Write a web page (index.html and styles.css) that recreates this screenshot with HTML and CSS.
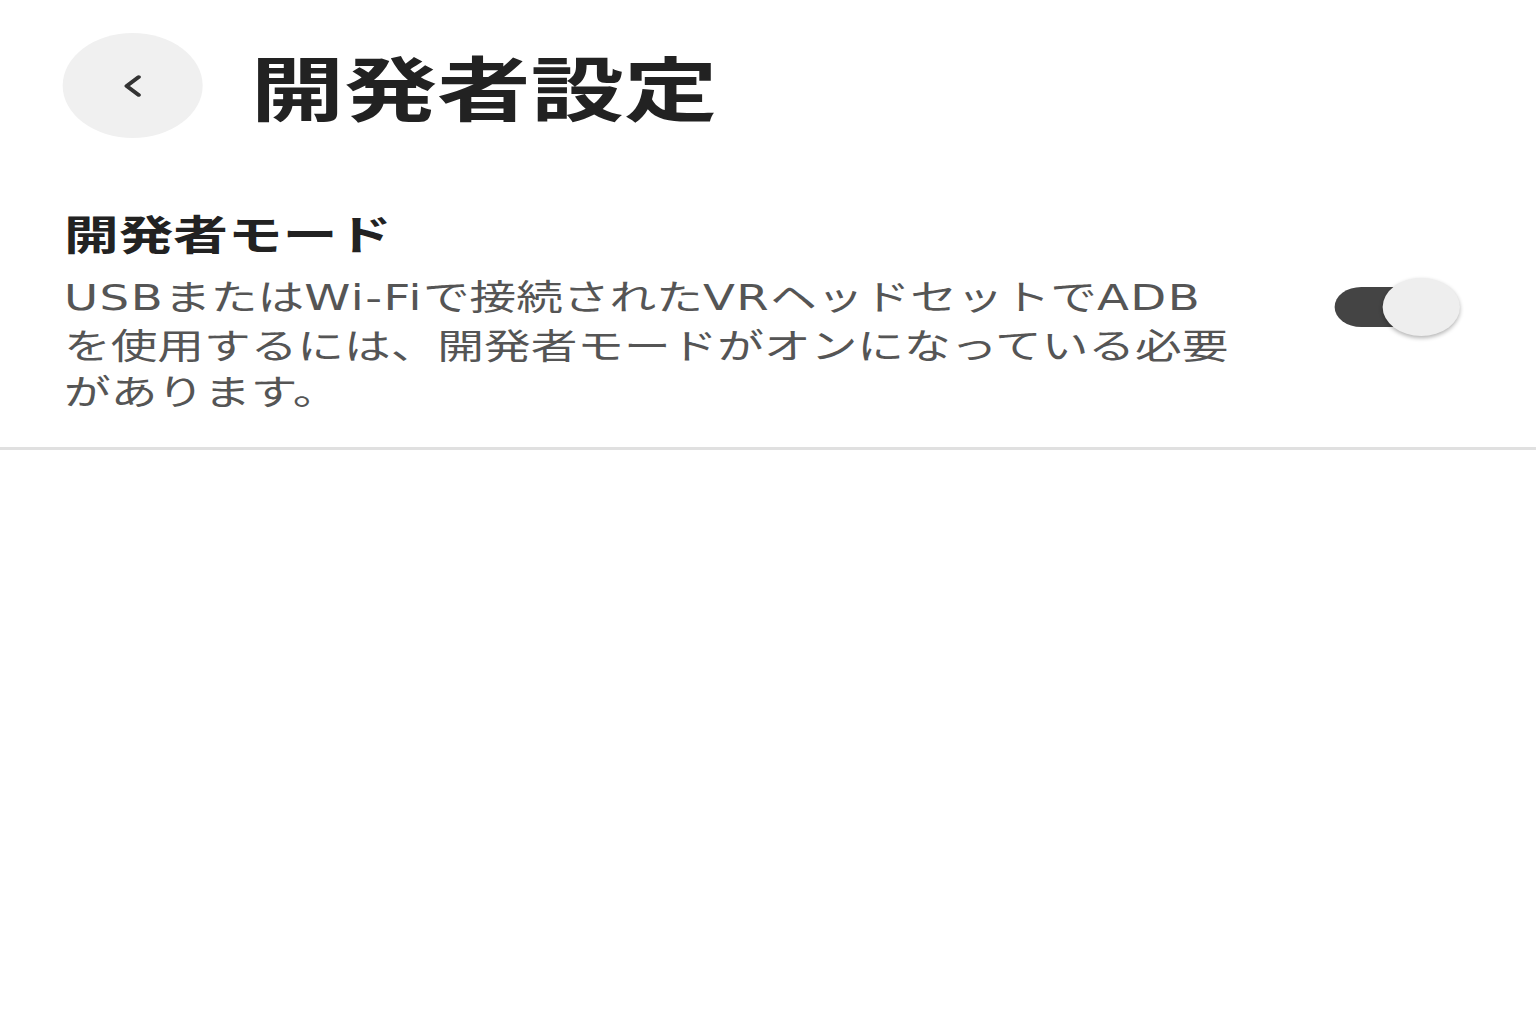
FILE: index.html
```html
<!DOCTYPE html>
<html lang="ja">
<head>
    <meta charset="UTF-8">
    <meta name="viewport" content="width=device-width, initial-scale=1.0">
    <title>開発者設定</title>
    <link rel="stylesheet" href="styles.css">
</head>
<body>
    <div class="screen">
        <header class="top-bar">
            <button class="back-btn" aria-label="戻る">
                <svg width="22" height="26" viewBox="0 0 22 26">
                    <path d="M15 4 L6 13 L15 22" fill="none" stroke="#333" stroke-width="3.4" stroke-linecap="round" stroke-linejoin="round"/>
                </svg>
            </button>
            <h1 class="page-title">開発者設定</h1>
        </header>

        <div class="setting-row">
            <div class="setting-text">
                <h2 class="setting-title">開発者モード</h2>
                <p class="setting-desc"><span class="en">USB</span>または<span class="en">Wi-Fi</span>で接続された<span class="en">VR</span>ヘッドセットで<span class="en">ADB</span>を使用するには、開発者モードがオンになっている必要があります。</p>
            </div>
            <!-- スイッチ (オン) -->
            <label class="switch">
                <input type="checkbox" checked>
                <span class="track"></span>
                <span class="thumb"></span>
            </label>
        </div>
    </div>
</body>
</html>
```

FILE: styles.css
```css
html, body {
    margin: 0;
    background-color: #fff;
    overflow: hidden;
}

body {
    font-family: "Noto Sans CJK JP", "Noto Sans", sans-serif;
    color: #222;
    height: 1024px;
}

/* 画面は横長に引き伸ばして表示する */
.screen {
    width: 1152px;
    transform: scaleX(1.3333);
    transform-origin: 0 0;
}

.top-bar {
    display: flex;
    align-items: center;
    padding: 33px 0 0 47px;
    gap: 36px;
}

.back-btn {
    width: 105px;
    height: 105px;
    border-radius: 50%;
    border: none;
    background-color: #f0f0f0;
    display: flex;
    justify-content: center;
    align-items: center;
    padding: 0;
    cursor: pointer;
}

.page-title {
    margin: 0;
    font-size: 70px;
    font-weight: 700;
    line-height: 105px;
    color: #222;
}

.setting-row {
    display: flex;
    justify-content: space-between;
    align-items: center;
    padding: 68px 57px 34px 48px;
    border-bottom: 3px solid #e0e0e0;
}

.setting-text {
    width: 885px;
}

.setting-title {
    margin: 0 0 14px;
    font-size: 41px;
    font-weight: 700;
    line-height: 52px;
    color: #222;
}

.setting-desc {
    margin: 0;
    font-size: 35px;
    line-height: 46px;
    color: #555;
}

/* 英字は少し広めに */
.setting-desc .en {
    font-family: "DejaVu Sans", "Noto Sans", sans-serif;
    letter-spacing: 1.1px;
}

.switch {
    position: relative;
    width: 94px;
    height: 60px;
    margin-top: -5px;
    cursor: pointer;
}

.switch input {
    display: none;
}

.track {
    position: absolute;
    left: 0;
    top: 10px;
    width: 88px;
    height: 40px;
    border-radius: 20px;
    background-color: #444;
}

.thumb {
    position: absolute;
    right: 0;
    top: 1px;
    width: 58px;
    height: 58px;
    border-radius: 50%;
    background-color: #eee;
    box-shadow: 0 2px 4px rgba(0, 0, 0, 0.3);
}
```
